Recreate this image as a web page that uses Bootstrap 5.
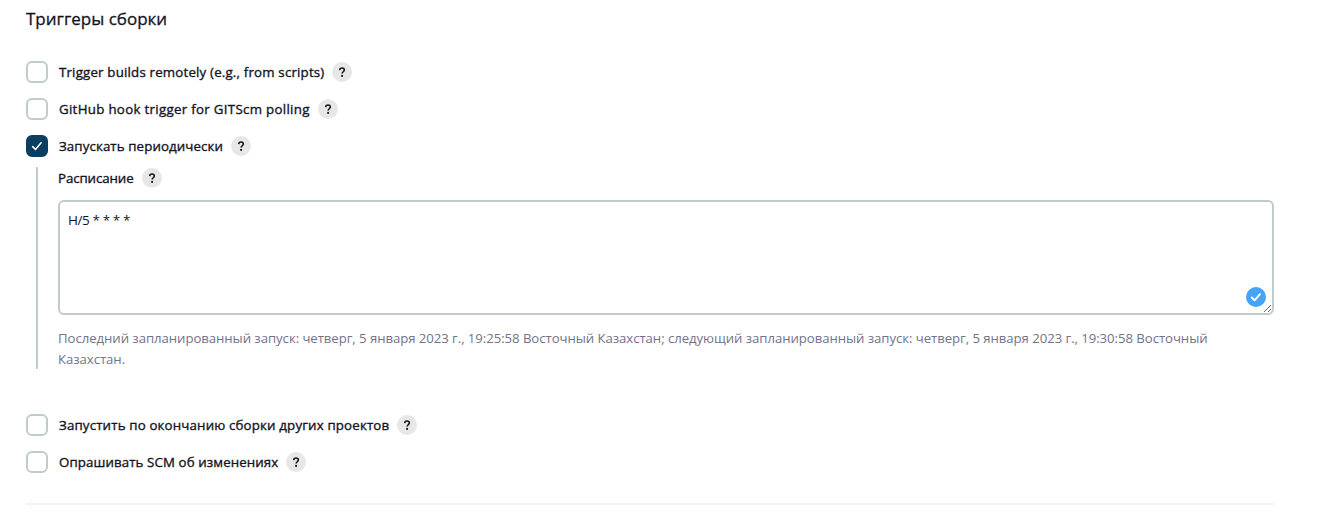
<!DOCTYPE html>
<html lang="ru">
<head>
<meta charset="utf-8">
<meta name="viewport" content="width=device-width, initial-scale=1">
<title>Триггеры сборки</title>
<link href="https://cdn.jsdelivr.net/npm/bootstrap@5.3.0/dist/css/bootstrap.min.css" rel="stylesheet">
<style>
body{font-family:"Open Sans","Noto Sans",sans-serif;font-size:14px;color:#14141f;overflow:hidden}
.triggers{padding:7px 44px 0 26px}
.section-title{font-size:17px;font-weight:400;-webkit-text-stroke:.3px #14141f;line-height:24px;margin:0 0 30px}
.option{height:22px;margin-bottom:15px}
.option .form-check-input{width:22px;height:22px;margin:0 11px 0 0;border:2px solid #bfcbcf;border-radius:6px;flex:none}
.option .form-check-input:checked{background-color:#0b3f61;border-color:#0b3f61;background-size:18px;background-image:url("data:image/svg+xml,%3Csvg xmlns='http://www.w3.org/2000/svg' viewBox='0 0 18 18'%3E%3Cpath d='M4.6 9.6l2.9 2.8 5.6-6.7' fill='none' stroke='white' stroke-width='1.5' stroke-linecap='round' stroke-linejoin='round'/%3E%3C/svg%3E")}
.caption{font-size:13.3px;font-weight:400;-webkit-text-stroke:.35px #14141f;line-height:20px;letter-spacing:.1px;white-space:nowrap}
.remote{letter-spacing:.18px}
.hook{letter-spacing:.3px}
.after{letter-spacing:.155px}
.schedule{letter-spacing:-.1px}
.help{width:20px;height:20px;margin-left:8px;background:#e7e7e8;color:#14141f;flex:none}
.nested{margin:-5px 0 45px 10px;padding-left:20px;border-left:2px solid #bfcbcf;height:202px}
.field-head{height:22px;margin-bottom:11px}
.spec{height:115px;padding:8px;border:2px solid #bfcbcf;border-radius:6px;font-size:13.5px;line-height:21px;letter-spacing:-.4px;color:#14141f;resize:vertical}
.valid-mark{right:8px;bottom:8px}
.note{font-size:13.2px;line-height:21px;letter-spacing:-.06px;color:#73738c;margin-top:13px}
.divider{height:2px;background:#f2f2f7;margin-top:30px}
</style>
</head>
<body>
<svg class="d-none"><symbol id="q" viewBox="0 0 20 20"><path d="M7.7 8.1C7.8 6.7 8.7 6 10 6c1.4 0 2.3.8 2.3 2 0 1.7-2.2 1.8-2.2 3.6" fill="none" stroke="#14141f" stroke-width="1.6"/><circle cx="10.1" cy="13.9" r="1.05" fill="#14141f"/></symbol></svg>
<main class="triggers">
<h2 class="section-title">Триггеры сборки</h2>
<div class="option d-flex align-items-center"><input class="form-check-input" type="checkbox" id="a"><label class="caption remote" for="a">Trigger builds remotely (e.g., from scripts)</label><a class="help rounded-circle d-flex"><svg width="20" height="20"><use href="#q"/></svg></a></div>
<div class="option d-flex align-items-center"><input class="form-check-input" type="checkbox" id="b"><label class="caption hook" for="b">GitHub hook trigger for GITScm polling</label><a class="help rounded-circle d-flex"><svg width="20" height="20"><use href="#q"/></svg></a></div>
<div class="option d-flex align-items-center"><input class="form-check-input" type="checkbox" id="c" checked><label class="caption" for="c">Запускать периодически</label><a class="help rounded-circle d-flex"><svg width="20" height="20"><use href="#q"/></svg></a></div>
<div class="nested">
<div class="field-head d-flex align-items-center"><label class="caption schedule" for="s">Расписание</label><a class="help rounded-circle d-flex"><svg width="20" height="20"><use href="#q"/></svg></a></div>
<div class="position-relative"><textarea class="form-control spec" id="s" spellcheck="false">H/5 * * * *</textarea>
<svg class="valid-mark position-absolute" width="20" height="20" viewBox="0 0 20 20"><circle cx="10" cy="10" r="10" fill="#45a3f8"/><path d="M5.8 10.5l2.8 2.9 5.4-6.2" fill="none" stroke="#fff" stroke-width="2" stroke-linecap="round" stroke-linejoin="round"/></svg></div>
<div class="note">Последний запланированный запуск: четверг, 5 января 2023 г., 19:25:58 Восточный Казахстан; следующий запланированный запуск: четверг, 5 января 2023 г., 19:30:58 Восточный<br>Казахстан.</div>
</div>
<div class="option d-flex align-items-center"><input class="form-check-input" type="checkbox" id="d"><label class="caption after" for="d">Запустить по окончанию сборки других проектов</label><a class="help rounded-circle d-flex"><svg width="20" height="20"><use href="#q"/></svg></a></div>
<div class="option d-flex align-items-center"><input class="form-check-input" type="checkbox" id="e"><label class="caption" for="e">Опрашивать SCM об изменениях</label><a class="help rounded-circle d-flex"><svg width="20" height="20"><use href="#q"/></svg></a></div>
<div class="divider"></div>
</main>
<script src="https://cdn.jsdelivr.net/npm/bootstrap@5.3.0/dist/js/bootstrap.bundle.min.js"></script>
</body>
</html>
